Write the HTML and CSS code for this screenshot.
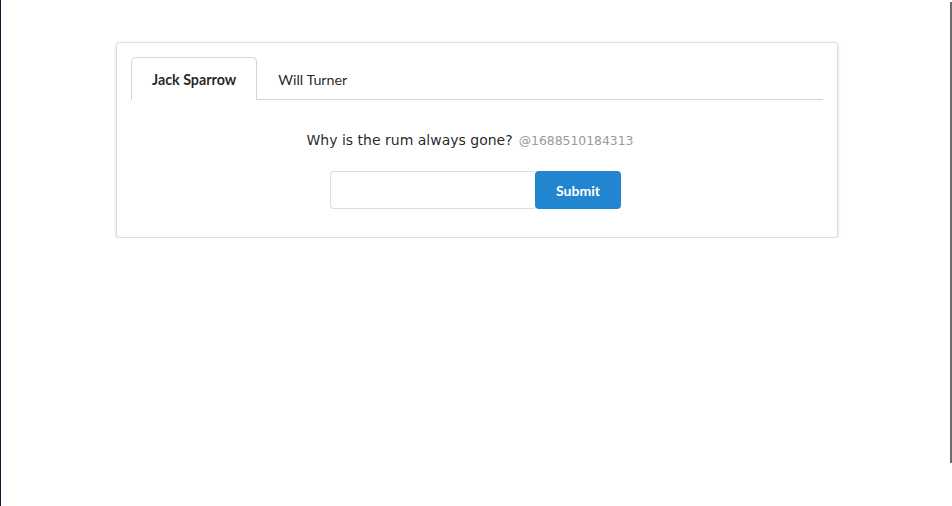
FILE: index.html
```html
<!DOCTYPE html>
<html>
    <head>
        <title>Pirates</title>
        <meta charset="UTF-8">
        <meta name="viewport" content="width=device-width, initial-scale=1.0">
        <link rel="stylesheet" href="styles.css">
    </head>
    <body>
        <div class="edge-left"></div>
        <div class="edge-right"></div>
        <div class="card">
            <div class="tabs">
                <a class="tab active">Jack Sparrow</a>
                <a class="tab">Will Turner</a>
            </div>
            <div class="pane">
                <p class="quote">Why is the rum always gone?<span class="stamp">@1688510184313</span></p>
                <form class="reply">
                    <input class="field" type="text">
                    <button class="btn" type="button">Submit</button>
                </form>
            </div>
        </div>
    </body>
</html>
```

FILE: styles.css
```css
body{
    margin: 0;
    background-color: #ffffff;
    font-family: "DejaVu Sans", sans-serif;
    color: rgba(0,0,0,.87);
}
.edge-left{
    position: fixed;
    left: 0;
    top: 0;
    width: 1px;
    height: 100%;
    background-color: #1b1236;
}
.edge-right{
    position: fixed;
    left: 950px;
    top: 2px;
    width: 2px;
    height: 461px;
    background-color: #6b6b6b;
}
.card{
    width: 692px;
    margin: 42px 0 0 116px;
    padding: 14px 14px 13px 14px;
    border: 1px solid rgba(34,36,38,.15);
    border-radius: 4px;
    box-shadow: 0 1px 3px 0 rgba(34,36,38,.2);
}
.tabs{
    display: flex;
    border-bottom: 1px solid #d4d4d5;
    font-family: Lato, sans-serif;
    font-size: 14.3px;
}
.tab{
    padding: 15px 20px 12px 20px;
    line-height: 14px;
    border: 1px solid transparent;
    border-bottom: none;
    border-radius: 5px 5px 0 0;
    margin-bottom: -1px;
    color: rgba(0,0,0,.87);
}
.tab.active{
    font-weight: bold;
    border-color: #d4d4d5;
    background-color: #ffffff;
    padding-bottom: 13px;
}
.pane{
    padding: 30px 0 15px 0;
    text-align: center;
}
.quote{
    margin: 0 14px 20px 0;
    font-size: 14px;
    line-height: 20px;
}
.stamp{
    margin-left: 6px;
    font-size: 12.4px;
    color: #9a9a9a;
}
.reply{
    display: flex;
    justify-content: center;
    margin: 0 0 0 -3px;
}
.field{
    width: 205px;
    height: 38px;
    box-sizing: border-box;
    border: 1px solid #dededf;
    border-right: none;
    border-radius: 4px 0 0 4px;
    outline: none;
}
.btn{
    width: 86px;
    height: 38px;
    border: 0;
    border-radius: 4px;
    background-color: #2185d0;
    color: #ffffff;
    font-family: Lato, sans-serif;
    font-weight: bold;
    font-size: 14px;
}
```
